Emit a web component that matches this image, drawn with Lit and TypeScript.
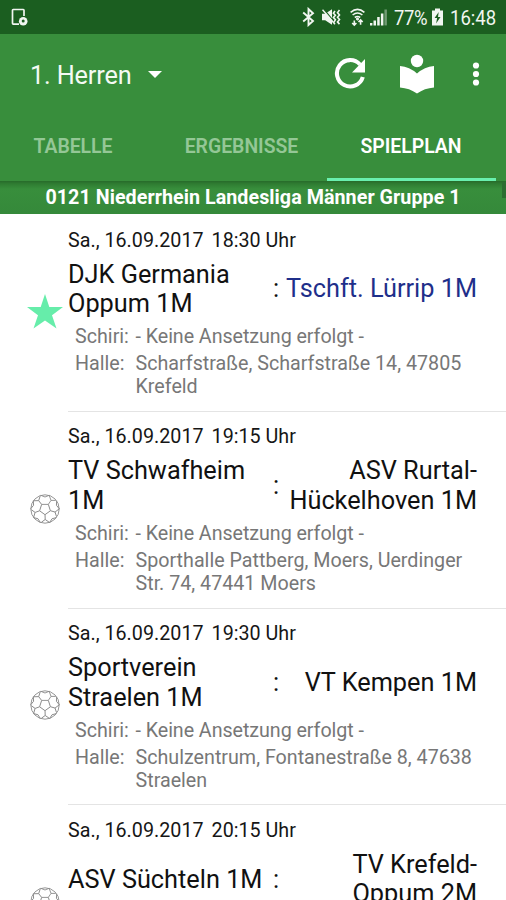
import { LitElement, html, css, svg, nothing } from "lit";
import { customElement, property } from "lit/decorators.js";

interface Match {
  date: string;
  time: string;
  home: string[];
  away: string[];
  own?: boolean;
  hall?: string[];
}

const matches: Match[] = [
  { date: "Sa., 16.09.2017", time: "18:30 Uhr", home: ["DJK Germania", "Oppum 1M"], away: ["Tschft. Lürrip 1M"], own: true, hall: ["Scharfstraße, Scharfstraße 14, 47805", "Krefeld"] },
  { date: "Sa., 16.09.2017", time: "19:15 Uhr", home: ["TV Schwafheim", "1M"], away: ["ASV Rurtal-", "Hückelhoven 1M"], hall: ["Sporthalle Pattberg, Moers, Uerdinger", "Str. 74, 47441 Moers"] },
  { date: "Sa., 16.09.2017", time: "19:30 Uhr", home: ["Sportverein", "Straelen 1M"], away: ["VT Kempen 1M"], hall: ["Schulzentrum, Fontanestraße 8, 47638", "Straelen"] },
  { date: "Sa., 16.09.2017", time: "20:15 Uhr", home: ["ASV Süchteln 1M"], away: ["TV Krefeld-", "Oppum 2M"] },
];

const star = html`<svg width="38" height="38" viewBox="0 0 38 38">
  <path fill="#66edaa" d="M19 1 23.3 14H37L26 22.2 30.5 35.5 19 27.4 7.5 35.5 12 22.2 1 14h13.7z"/></svg>`;

const ball = html`<svg width="38" height="38" viewBox="0 0 38 38" fill="none" stroke="#8a8a8a" stroke-width=".9">
  <circle cx="19" cy="19" r="14.2"/>
  ${[0, 72, 144, 216, 288].map(
    (a) => svg`<g transform="rotate(${a} 19 19)"><path d="M15.700 14.400h6.600M22.300 14.400 25 10.400M14.800 5.300 19 7l4.200-1.700M23.200 5.300 25 10.400l4.700 0"/></g>`
  )}</svg>`;

@customElement("status-bar")
class StatusBar extends LitElement {
  static styles = css`
    :host { display: flex; height: 34px; background: #1b5e20; color: #f1f6f1; align-items: center; box-sizing: border-box; padding: 0 10px; }
    svg { display: block; flex: none; }
    .gap { flex: 1; }
    .txt { font-size: 19.7px; white-space: nowrap; line-height: 34px; padding-top: 3px; transform-origin: left; transform: scaleX(.94); }
    .pct { width: 34px; margin-left: 7px; letter-spacing: -0.4px; }
    .time { width: 46px; margin-left: 7px; letter-spacing: 0; }
    .mute { margin-left: 5px; }
    .wifi { margin-left: 8px; }
    .sig { margin-left: 5px; }
    .bat { margin-left: 4px; }
  `;
  render() {
    return html`
      <svg width="19" height="20" viewBox="0 0 19 20"><path d="M14 9V3.2Q14 2.5 13.3 2.5H3.2Q2.5 2.5 2.5 3.2v13.1q0 .8.7.8H9" fill="none" stroke="currentColor" stroke-width="1.7"/><circle cx="13.2" cy="14.2" r="4.3" fill="currentColor"/><circle cx="13.2" cy="14" r="1.5" fill="#1b5e20"/></svg>
      <span class="gap"></span>
      <svg width="17" height="20" viewBox="-2 0 17 20" fill="none" stroke="currentColor" stroke-width="1.9"><path d="M1.2 5.5 11 14l-4.5 4V2L11 6.2 1.2 14.5"/></svg>
      <svg class="mute" width="20" height="20" viewBox="1 0 20 20"><path fill="currentColor" d="M1 6.8h3.200L11 2.200v15.600l-6.800-4.600H1z"/><path stroke="#1b5e20" stroke-width="1.2" d="M3 2.500 15 17"/><path d="m1.500 2.800 12.500 14.500" stroke="currentColor" stroke-width="1.5"/><path d="m14 4-1.600 2.200 2 2-2 2.300 2 2.200-1.500 2.600M18.500 3l-2 2.600 2 2.300-2 2.400 2 2.300-2 2.300 2 2.200" fill="none" stroke="currentColor" stroke-width="1.6"/></svg>
      <svg class="wifi" width="15" height="20" viewBox="0 0 15 20" fill="none" stroke="currentColor"><path stroke-width="1.6" d="M.6 5.300Q7.500-.5 14.400 5.300M2.600 8Q7.500 4 12.400 8M4.800 10.500q2.700-2 5.400 0"/><circle cx="7.500" cy="12" r="1.100" fill="currentColor"/><path stroke-width="1.6" d="M4.300 18.400v-5M2.200 16l2.100 2.200L6.400 16M10.600 12.800v5M8.500 15l2.100-2.100 2.100 2.100"/></svg>
      <svg class="sig" width="17" height="20" viewBox="0 0 17 20" fill="currentColor"><path d="M0 16h2.400v2.400H0zM3.500 13.400H6v5H3.500zM7.200 10h2.500v8.400H7.200zM10.900 6.400h2.500v12h-2.500z"/><path opacity=".4" d="M14.400 2.500h2.500v15.900h-2.500z"/></svg>
      <span class="txt pct">77%</span>
      <svg class="bat" width="11" height="20" viewBox="0 0 11 20"><path fill="currentColor" d="M3 1.500h5V3.500h3v15H0v-15h3z"/><path fill="#1b5e20" d="M6.700 5 2.600 11h2.500l-1 5.500L8.500 10H6z"/></svg>
      <span class="txt time">16:48</span>`;
  }
}

@customElement("match-row")
class MatchRow extends LitElement {
  @property({ attribute: false }) match!: Match;
  static styles = css`
    :host { display: grid; grid-template-columns: 68px 1fr; height: 196.8px; flex: none; }
    .icon { display: flex; align-items: center; padding: 0 0 3px 26px; }
    svg { display: block; }
    .body { border-bottom: 1.5px solid #e4e4e4; padding-top: 13.5px; box-sizing: border-box; white-space: nowrap; }
    .date { font-size: 19.7px; line-height: 23px; color: #161616; display: flex; gap: 8px; letter-spacing: .02px; }
    .teams { display: grid; grid-template-columns: 205px 9px 1fr; align-items: center; height: 59px; margin: 8px 29px 0 0; font-size: 25.3px; line-height: 29.5px; color: #111; }
    .away { text-align: right; }
    .away.own { color: #1f2f8a; }
    .info { display: grid; grid-template-columns: 60.5px 1fr; row-gap: 4px; margin: 6.7px 0 0 7px; font-size: 19.7px; line-height: 23px; color: #777; }
    .none { letter-spacing: -.06px; }
  `;
  render() {
    const m = this.match;
    const lines = (t: string[]) => t.map((l) => html`<div>${l}</div>`);
    return html`
      <div class="icon">${m.own ? star : ball}</div>
      <div class="body">
        <div class="date"><span>${m.date}</span><span>${m.time}</span></div>
        <div class="teams"><div class="home">${lines(m.home)}</div><div>:</div><div class="away ${m.own ? "own" : ""}">${lines(m.away)}</div></div>
        ${m.hall
          ? html`<div class="info"><div>Schiri:</div><div class="none">- Keine Ansetzung erfolgt -</div><div>Halle:</div><div>${lines(m.hall)}</div></div>`
          : nothing}
      </div>`;
  }
}

@customElement("app-root")
class AppRoot extends LitElement {
  static styles = css`
    :host { display: flex; flex-direction: column; height: 900px; overflow: hidden; background: #fff; font-family: Roboto, sans-serif; }
    .bar { height: 80px; flex: none; background: #388e3c; color: #fff; display: flex; align-items: center; box-sizing: border-box; padding: 0 24px 0 30px; }
    status-bar { flex: none; }
    .title { font-size: 25.3px; letter-spacing: -.15px; width: 101px; white-space: nowrap; color: #f4faf4; padding-top: 2px; }
    .caret { margin: 0 0 0 17px; }
    .gap { flex: 1; }
    svg { display: block; flex: none; }
    .book { margin-left: 33px; }
    .more { margin-left: 35px; }
    .tabs { height: 67px; flex: none; background: #388e3c; display: grid; grid-template-columns: 157px 170px 169px 10px; font-size: 19.4px; font-weight: 600; line-height: 62px; color: #94c796; }
    .tab { text-align: center; white-space: nowrap; box-sizing: border-box; padding: 2px 1px 0 0; }
    .first { padding-right: 11px; }
    .active { color: #fff; border-bottom: 3px solid #69f0ae; }
    .group { height: 33px; flex: none; box-sizing: border-box; background: linear-gradient(#276b2a, #2f7d32 3px, #388e3c 8px, #35893a); color: #fff; display: flex; justify-content: center; font-size: 19.7px; letter-spacing: .05px; font-weight: 700; line-height: 34px; white-space: nowrap; position: relative; }
    .thumb { position: absolute; right: 0; top: 1px; width: 4px; height: 16px; background: #2c6e31; }
    .list { display: flex; flex-direction: column; flex: 1; min-height: 0; overflow: hidden; padding-top: 1px; }
  `;
  render() {
    return html`
      <status-bar></status-bar>
      <div class="bar">
        <span class="title">1. Herren</span>
        <svg class="caret" width="14" height="7" viewBox="0 0 14 7"><path fill="#fff" d="M0 0h14L7 7z"/></svg>
        <span class="gap"></span>
        <svg width="32" height="32" viewBox="0 0 32 32"><path d="M26 6.500A13.200 13.200 0 1 0 28.800 19" fill="none" stroke="#fff" stroke-width="4.100"/><path fill="#fff" d="M31 1v13.500H18z"/></svg>
        <svg class="book" width="36" height="40" viewBox="0 0 36 40" fill="#fff"><circle cx="18" cy="7" r="6.200"/><path d="M18 19.500Q10.500 12.800 1 12v21.500q9.500.7 17 6 7.500-5.300 17-6V12q-9.500.8-17 7.500z"/></svg>
        <svg class="more" width="12" height="26" viewBox="0 0 12 26" fill="#fff"><circle cx="6" cy="4.500" r="3.100"/><circle cx="6" cy="13" r="3.100"/><circle cx="6" cy="21.500" r="3.100"/></svg>
      </div>
      <div class="tabs"><div class="tab first">TABELLE</div><div class="tab">ERGEBNISSE</div><div class="tab active">SPIELPLAN</div></div>
      <div class="group">0121 Niederrhein Landesliga Männer Gruppe 1<span class="thumb"></span></div>
      <div class="list">${matches.map((m) => html`<match-row .match=${m}></match-row>`)}</div>`;
  }
}
